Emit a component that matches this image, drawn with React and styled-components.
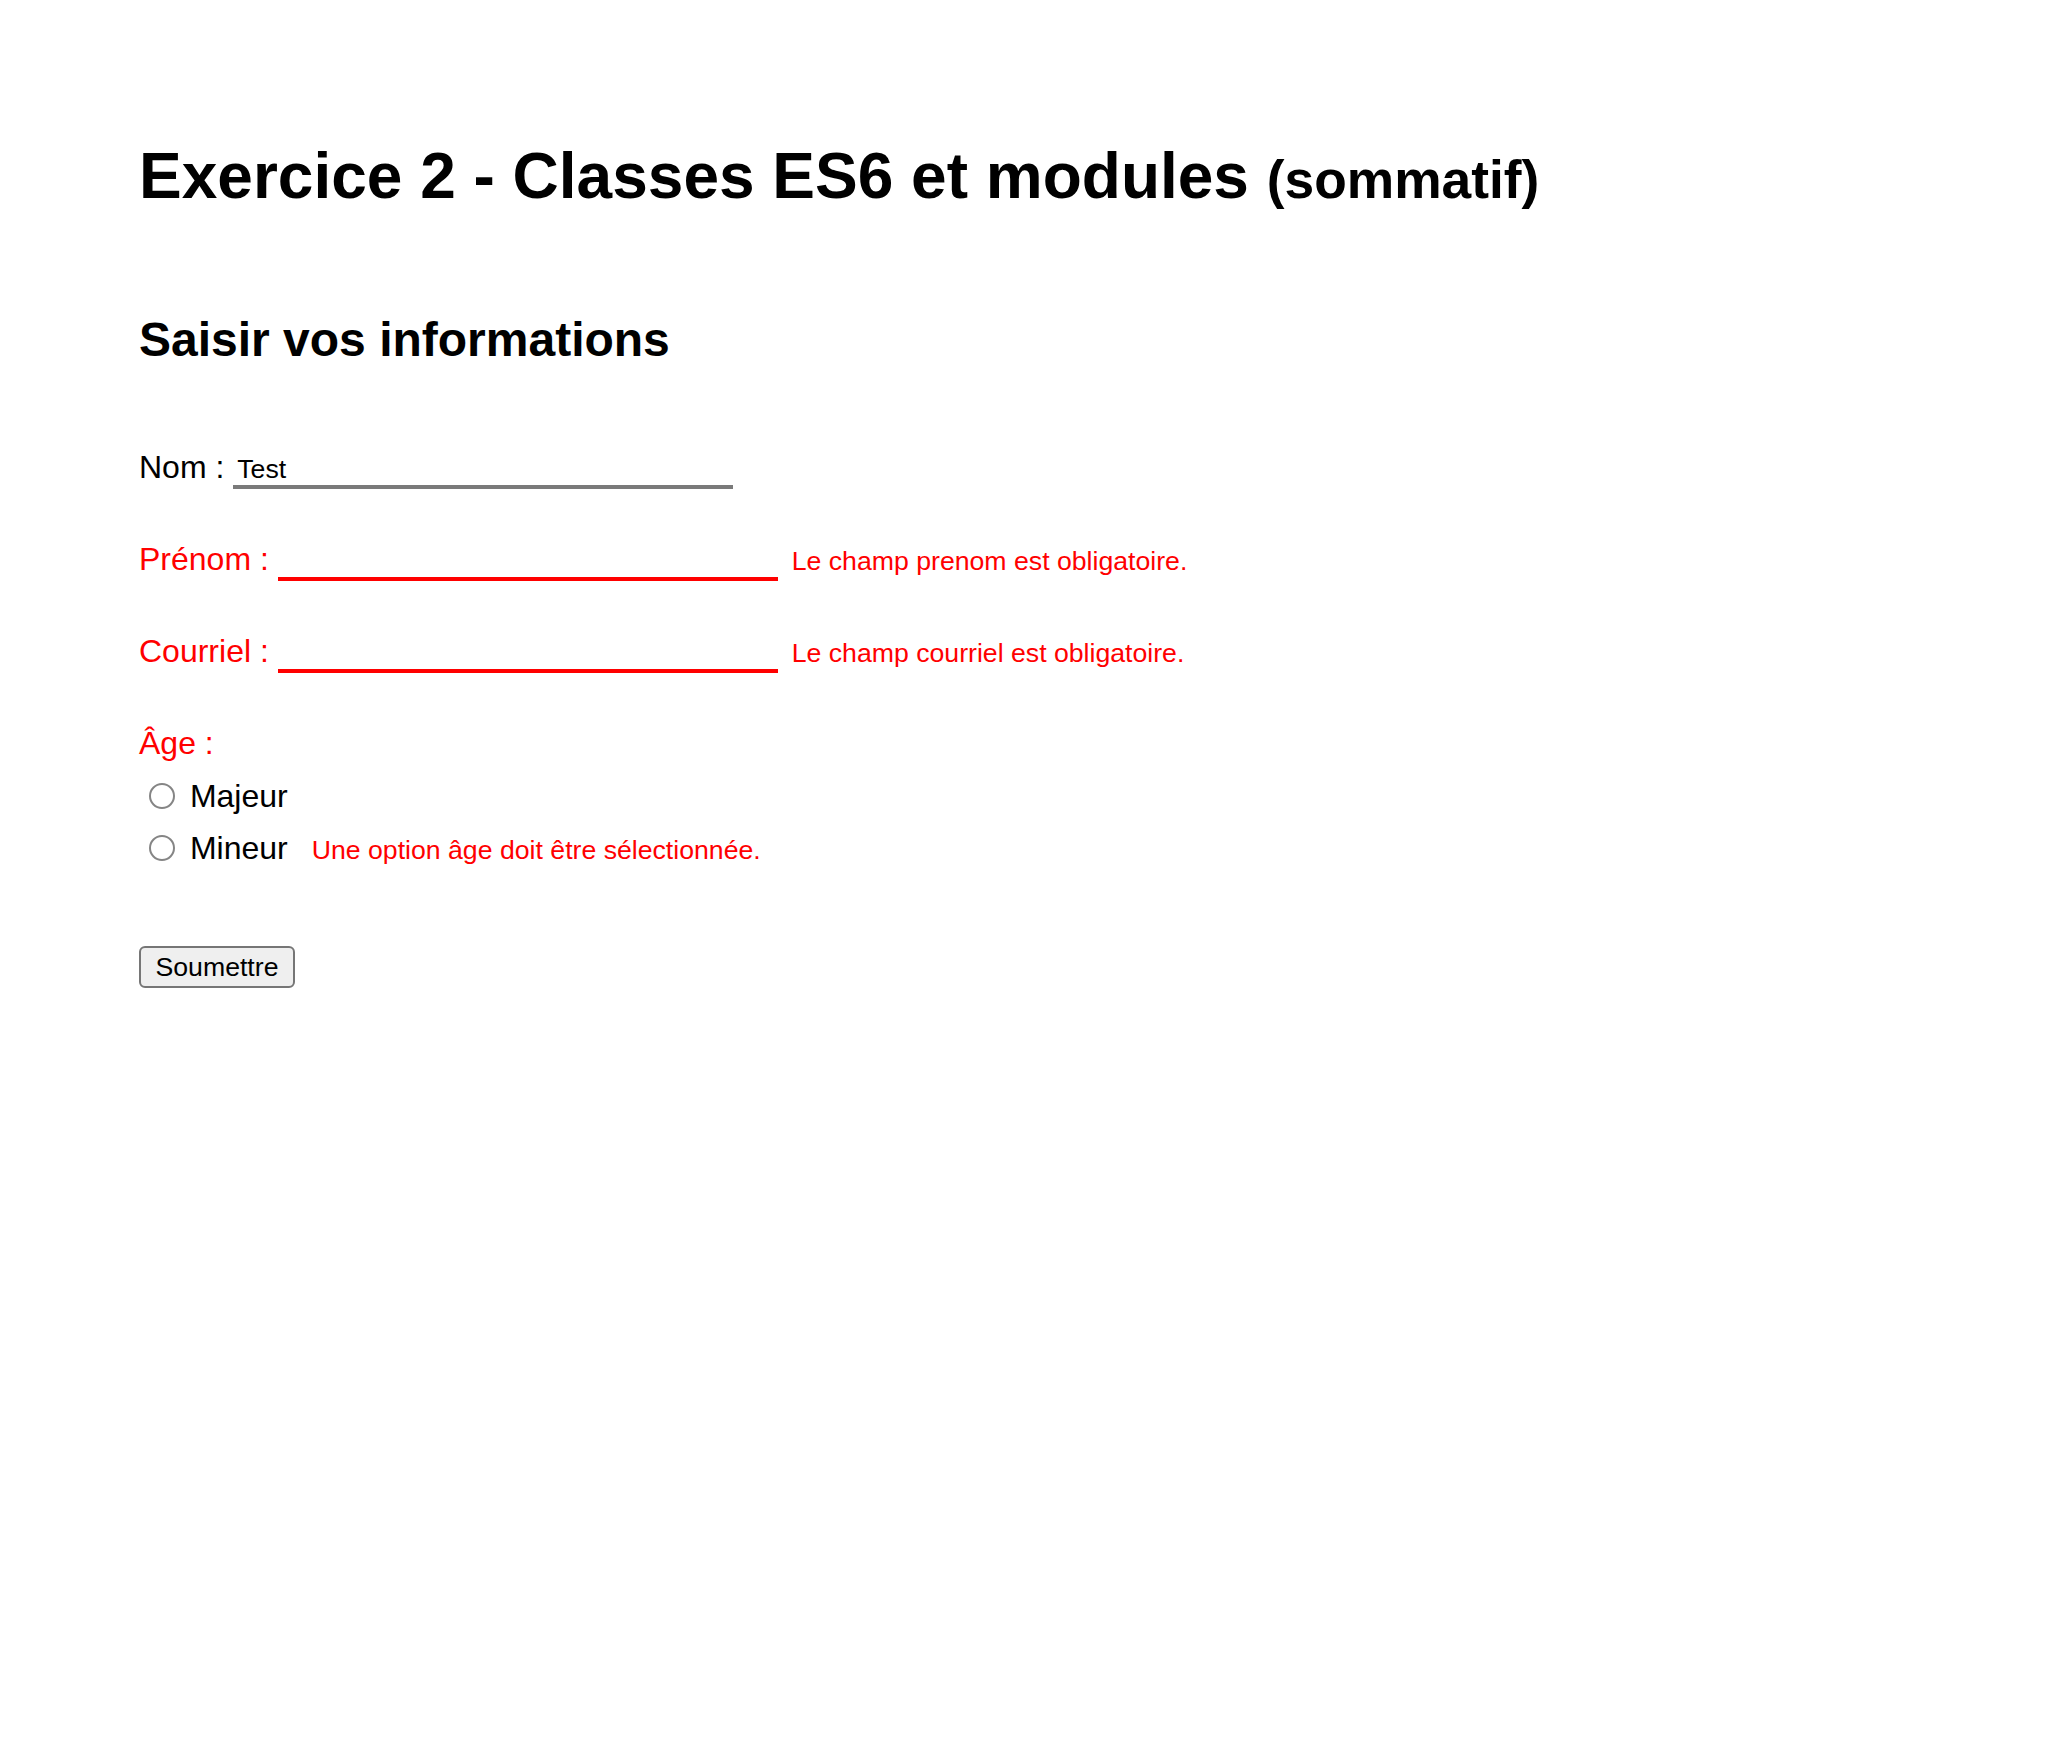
import React from "react";
import styled, { createGlobalStyle } from "styled-components";

const GlobalStyle = createGlobalStyle`
  html, body {
    margin: 0;
    padding: 0;
    background: #ffffff;
  }
  body {
    font-family: "Liberation Sans", Arial, Helvetica, sans-serif;
    color: #000000;
  }
`;

const RED = "#ff0000";

const Page = styled.main`
  padding: 139px 0 0 139px;
  min-height: 1764px;
  box-sizing: border-box;
`;

const Title = styled.h1`
  margin: 0;
  font-size: 64px;
  line-height: 74px;
  font-weight: 700;
`;

const TitleNote = styled.small`
  font-size: 53.33px;
  font-weight: 700;
`;

const Subtitle = styled.h2`
  margin: 95px 0 0;
  font-size: 48px;
  line-height: 56px;
  font-weight: 700;
`;

const Form = styled.form`
  margin-top: 79px;
`;

const FieldRow = styled.div`
  height: 40px;
  line-height: 40px;
  font-size: 32px;
  margin-bottom: 52px;
  white-space: nowrap;
`;

const Label = styled.label`
  color: ${(p) => (p.$invalid ? RED : "#000000")};
`;

const TextInput = styled.input`
  box-sizing: border-box;
  width: 500px;
  margin: 0;
  padding: 1px 4px 0;
  border: none;
  border-bottom: 4px solid ${(p) => (p.$invalid ? RED : "#7a7a7a")};
  background: transparent;
  font-family: "Liberation Sans", Arial, sans-serif;
  font-size: 26.67px;
  line-height: normal;
  color: #000000;
  outline: none;
  vertical-align: baseline;
`;

const ErrorText = styled.span`
  margin-left: ${(p) => p.$gap}px;
  color: ${RED};
  font-size: 26.67px;
  line-height: normal;
`;

const AgeGroup = styled.fieldset`
  margin: 0;
  padding: 0;
  border: none;
  min-width: 0;
`;

const AgeLabel = styled.legend`
  padding: 0;
  float: left;
  width: 100%;
  height: 40px;
  line-height: 40px;
  font-size: 32px;
  color: ${RED};
`;

const RadioList = styled.div`
  clear: both;
  padding-top: 7px;
`;

const RadioRow = styled.div`
  height: 52px;
  line-height: 52px;
  font-size: 32px;
  white-space: nowrap;
`;

const Radio = styled.input`
  appearance: none;
  -webkit-appearance: none;
  box-sizing: border-box;
  width: 26px;
  height: 26px;
  margin: 0 6px 0 10px;
  border: 2px solid #858585;
  border-radius: 50%;
  background: #ffffff;
  vertical-align: -2px;
  &:checked {
    border-color: #1a73e8;
    box-shadow: inset 0 0 0 5px #ffffff;
    background: #1a73e8;
  }
`;

const SubmitButton = styled.button`
  display: block;
  margin-top: 72px;
  box-sizing: border-box;
  height: 42px;
  padding: 0 14.5px;
  border: 2px solid #767676;
  border-radius: 6px;
  background: #efefef;
  font-family: "Liberation Sans", Arial, sans-serif;
  font-size: 26.67px;
  line-height: normal;
  color: #000000;
  cursor: pointer;
`;

export default function App() {
  return (
    <>
      <GlobalStyle />
      <Page>
        <Title>
          Exercice 2 - Classes ES6 et modules <TitleNote>(sommatif)</TitleNote>
        </Title>
        <Subtitle>Saisir vos informations</Subtitle>
        <Form onSubmit={(e) => e.preventDefault()} noValidate>
          <FieldRow>
            <Label htmlFor="nom">Nom :</Label>{" "}
            <TextInput id="nom" type="text" defaultValue="Test" />
          </FieldRow>
          <FieldRow>
            <Label htmlFor="prenom" $invalid>
              Prénom :
            </Label>{" "}
            <TextInput id="prenom" type="text" $invalid />
            <ErrorText $gap={14}>Le champ prenom est obligatoire.</ErrorText>
          </FieldRow>
          <FieldRow>
            <Label htmlFor="courriel" $invalid>
              Courriel :
            </Label>{" "}
            <TextInput id="courriel" type="email" $invalid />
            <ErrorText $gap={14}>Le champ courriel est obligatoire.</ErrorText>
          </FieldRow>
          <AgeGroup>
            <AgeLabel>Âge :</AgeLabel>
            <RadioList>
              <RadioRow>
                <Radio type="radio" name="age" id="majeur" value="majeur" />{" "}
                <label htmlFor="majeur">Majeur</label>
              </RadioRow>
              <RadioRow>
                <Radio type="radio" name="age" id="mineur" value="mineur" />{" "}
                <label htmlFor="mineur">Mineur</label>
                <ErrorText $gap={24}>Une option âge doit être sélectionnée.</ErrorText>
              </RadioRow>
            </RadioList>
          </AgeGroup>
          <SubmitButton type="submit">Soumettre</SubmitButton>
        </Form>
      </Page>
    </>
  );
}
